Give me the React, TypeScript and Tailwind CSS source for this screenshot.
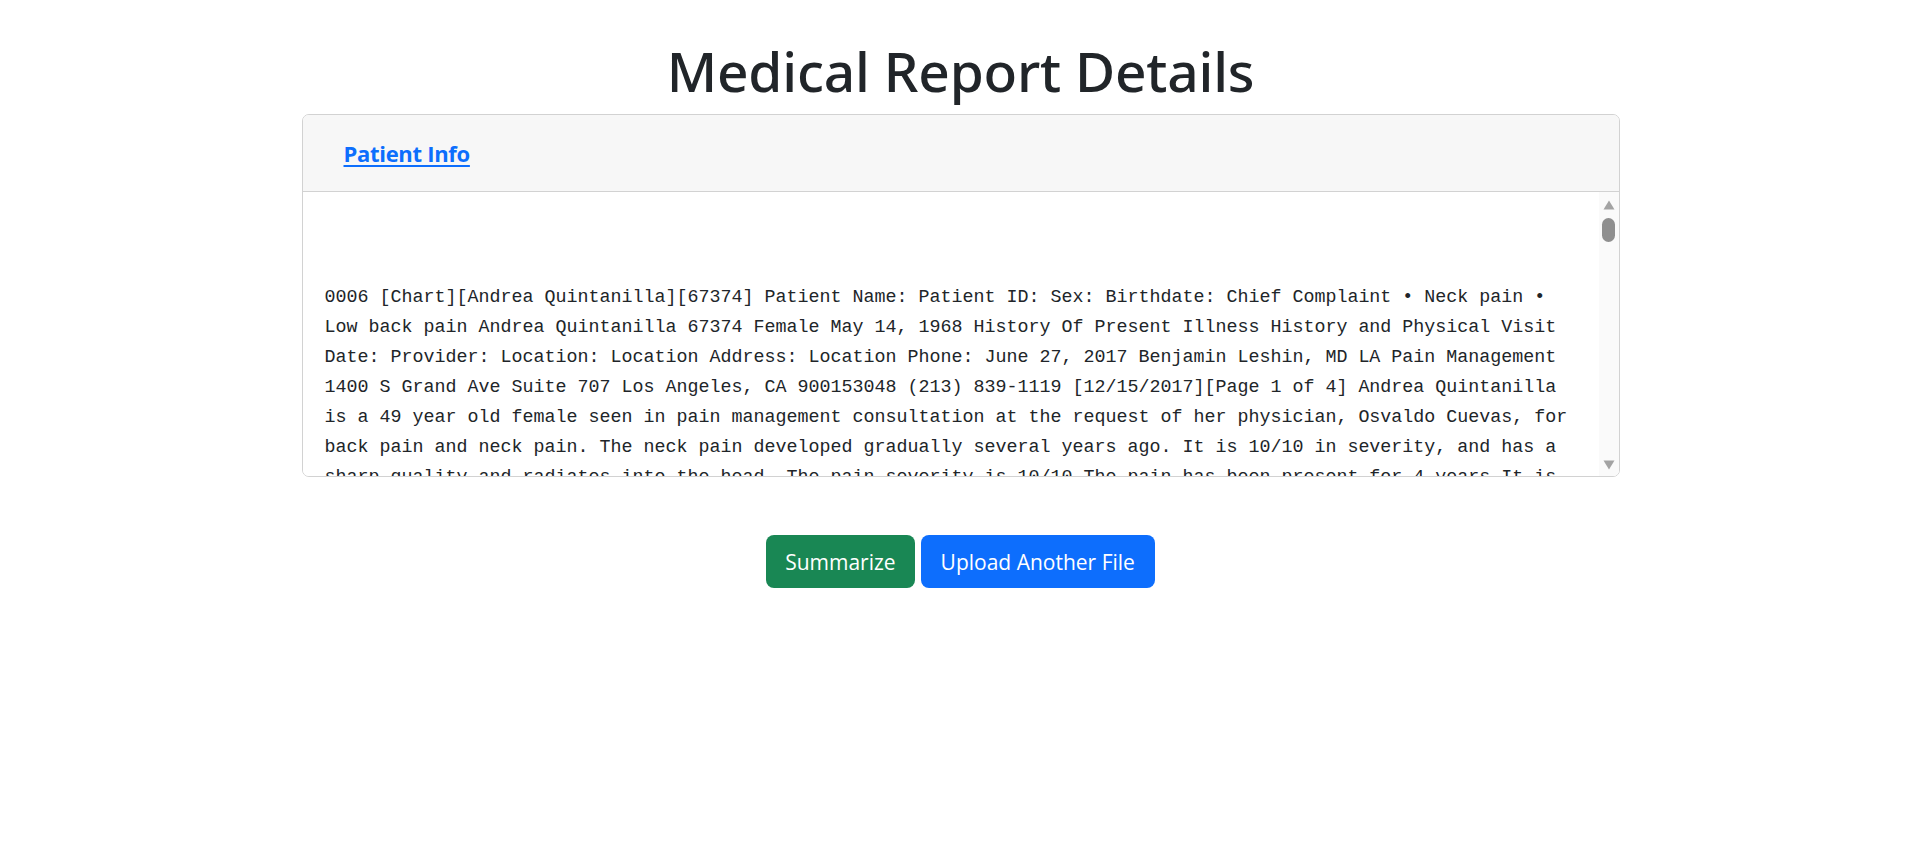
import React from "react";

const lines = [
  "0006 [Chart][Andrea Quintanilla][67374] Patient Name: Patient ID: Sex: Birthdate: Chief Complaint • Neck pain •",
  "Low back pain Andrea Quintanilla 67374 Female May 14, 1968 History Of Present Illness History and Physical Visit",
  "Date: Provider: Location: Location Address: Location Phone: June 27, 2017 Benjamin Leshin, MD LA Pain Management",
  "1400 S Grand Ave Suite 707 Los Angeles, CA 900153048 (213) 839-1119 [12/15/2017][Page 1 of 4] Andrea Quintanilla",
  "is a 49 year old female seen in pain management consultation at the request of her physician, Osvaldo Cuevas, for",
  "back pain and neck pain. The neck pain developed gradually several years ago. It is 10/10 in severity, and has a",
  "sharp quality and radiates into the head. The pain severity is 10/10 The pain has been present for 4 years It is",
  "worse with activity and improved with rest. The low back pain developed gradually several years ago. It is 10/10",
  "in severity, and has a sharp quality and radiates into the legs. The pain has been present for 4 years.",
];

function Scrollbar() {
  return (
    <div className="w-[20px] shrink-0 bg-[#fafafa] flex flex-col items-center pt-[8px] pb-[6px]">
      <svg width="12" height="10" viewBox="0 0 12 10" className="block">
        <path d="M6 0.5 L11.5 9.5 L0.5 9.5 Z" fill="#a3a3a3" />
      </svg>
      <div className="mt-[8px] w-[13px] h-[24px] rounded-full bg-[#8f8f8f]" />
      <div className="flex-1" />
      <svg width="12" height="10" viewBox="0 0 12 10" className="block">
        <path d="M0.5 0.5 L11.5 0.5 L6 9.5 Z" fill="#a3a3a3" />
      </svg>
    </div>
  );
}

export default function App() {
  return (
    <div className="min-h-screen bg-white text-[#212529] font-['Open_Sans','Noto_Sans',sans-serif] pt-[43px]">
      <h1 className="text-center font-['Noto_Sans','Open_Sans',sans-serif] text-[55px] leading-[55px] font-medium tracking-[-0.2px] mb-[16px]">
        Medical Report Details
      </h1>
      <div className="mx-auto w-[1318px] rounded-[7px] border border-[#d2d2d2] overflow-hidden">
        <div className="h-[77px] bg-[#f7f7f7] border-b border-[#d2d2d2] flex items-center pl-[41px] pt-[1px]">
          <a
            href="#"
            className="text-[#0d6efd] underline underline-offset-[3px] decoration-[2px] font-bold text-[22px] tracking-[-0.3px]"
          >
            Patient Info
          </a>
        </div>
        <div className="flex h-[284px] bg-white">
          <div className="flex-1 overflow-hidden pl-[22px] pt-[91px] font-['Liberation_Mono','DejaVu_Sans_Mono',monospace] text-[18.333px] leading-[30px] text-[#212529]">
            {lines.map((l, i) => (
              <div key={i} className="whitespace-pre">
                {l}
              </div>
            ))}
          </div>
          <Scrollbar />
        </div>
      </div>
      <div className="flex justify-center gap-[6px] mt-[58px]">
        <button className="h-[53px] px-[19px] pt-[2px] rounded-[8px] bg-[#198754] text-white text-[21px]">
          Summarize
        </button>
        <button className="h-[53px] px-[20px] pt-[2px] rounded-[8px] bg-[#0d6efd] text-white text-[21px]">
          Upload Another File
        </button>
      </div>
    </div>
  );
}
